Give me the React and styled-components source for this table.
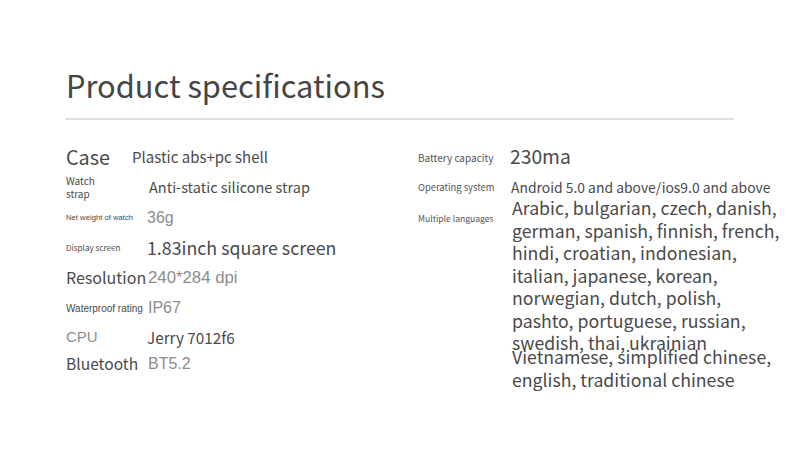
import styled, { createGlobalStyle } from 'styled-components';

const GlobalStyle = createGlobalStyle`
  html, body {
    margin: 0;
    padding: 0;
    background: #ffffff;
  }
  body {
    font-family: "Noto Sans CJK SC", "Noto Sans", sans-serif;
    color: #4a4a4a;
  }
`;

const leftSpecs = [
  { label: 'Case', labelSize: 19.8, value: 'Plastic abs+pc shell', valueSize: 15, gap: 66, h: 30 },
  { label: 'Watch\nstrap', labelSize: 10, value: 'Anti-static silicone strap', valueSize: 14.5, gap: 83, h: 30 },
  { label: 'Net weight of watch', labelSize: 7.7, value: '36g', valueSize: 16, gap: 81, h: 32, light: true, plainLabel: true },
  { label: 'Display screen', labelSize: 8.1, value: '1.83inch square screen', valueSize: 17.8, gap: 81, h: 28 },
  { label: 'Resolution', labelSize: 16, value: '240*284 dpi', valueSize: 16.8, gap: 82, h: 32, light: true },
  { label: 'Waterproof rating', labelSize: 10, value: 'IP67', valueSize: 16, gap: 82, h: 28, light: true, plainLabel: true },
  { label: 'CPU', labelSize: 15, value: 'Jerry 7012f6', valueSize: 15.3, gap: 81, h: 30, lightLabel: true },
  { label: 'Bluetooth', labelSize: 15.6, value: 'BT5.2', valueSize: 16, gap: 82, h: 24, light: true },
];

const languagesA = [
  'Arabic, bulgarian, czech, danish,',
  'german, spanish, finnish, french,',
  'hindi, croatian, indonesian,',
  'italian, japanese, korean,',
  'norwegian, dutch, polish,',
  'pashto, portuguese, russian,',
  'swedish, thai, ukrainian',
];
const languagesB = ['Vietnamese, simplified chinese,', 'english, traditional chinese'];

const App = () => {
  return (
    <Page>
      <GlobalStyle />
      <Title>Product specifications</Title>
      <Divider />
      <Columns>
        <LeftColumn>
          {leftSpecs.map((spec) => (
            <SpecRow key={spec.label} $gap={spec.gap} $h={spec.h}>
              <Label $size={spec.labelSize} $light={spec.lightLabel} $plain={spec.plainLabel}>
                {spec.label}
              </Label>
              <Value $size={spec.valueSize} $light={spec.light}>
                {spec.value}
              </Value>
            </SpecRow>
          ))}
        </LeftColumn>

        <RightColumn>
          <SpecRow $gap={92} $h={30}>
            <SmallLabel $size={10}>Battery capacity</SmallLabel>
            <Value $size={19.3}>230ma</Value>
          </SpecRow>
          <SpecRow $gap={93} $h={30}>
            <SmallLabel $size={9.4}>Operating system</SmallLabel>
            <Value $size={13.9}>Android 5.0 and above/ios9.0 and above</Value>
          </SpecRow>
          <LanguageRow>
            <SmallLabel $size={8.6} $offset={16}>
              Multiple languages
            </SmallLabel>
            <LanguageStack>
              <LanguageBlock>
                {languagesA.map((line) => (
                  <LanguageLine key={line}>{line}</LanguageLine>
                ))}
              </LanguageBlock>
              <LanguageBlock $overlap>
                {languagesB.map((line) => (
                  <LanguageLine key={line}>{line}</LanguageLine>
                ))}
              </LanguageBlock>
            </LanguageStack>
          </LanguageRow>
        </RightColumn>
      </Columns>
    </Page>
  );
};

export default App;

const Page = styled.div`
  width: 800px;
  height: 476px;
  padding: 62px 66px 0 66px;
  box-sizing: border-box;
  overflow: hidden;
`;

const Title = styled.h1`
  margin: 0;
  font-size: 30.8px;
  font-weight: 400;
  line-height: 46px;
  color: #454545;
`;

const Divider = styled.div`
  height: 2px;
  background: #e0e0e0;
  margin: 10px 0 0 -1px;
  width: 669px;
`;

const Columns = styled.div`
  display: grid;
  grid-template-columns: 352px 1fr;
  margin-top: 22px;
`;

const LeftColumn = styled.div`
  display: flex;
  flex-direction: column;
`;

const RightColumn = styled.div`
  display: flex;
  flex-direction: column;
`;

const SpecRow = styled.div`
  display: grid;
  grid-template-columns: ${(p) => p.$gap}px 1fr;
  align-items: center;
  height: ${(p) => p.$h}px;
`;

const Label = styled.div`
  font-size: ${(p) => p.$size}px;
  line-height: ${(p) => (p.$size < 12 ? 1.3 : 1.1)};
  white-space: pre-line;
  color: ${(p) => (p.$light ? '#8c8c8c' : '#4a4a4a')};
  font-family: ${(p) =>
    p.$light || p.$plain
      ? '"Liberation Sans", Arial, sans-serif'
      : '"Noto Sans CJK SC", "Noto Sans", sans-serif'};
`;

const Value = styled.div`
  font-size: ${(p) => p.$size}px;
  line-height: 1.2;
  white-space: nowrap;
  color: ${(p) => (p.$light ? '#8c8c8c' : '#4a4a4a')};
  font-family: ${(p) =>
    p.$light
      ? '"Liberation Sans", Arial, sans-serif'
      : '"Noto Sans CJK SC", "Noto Sans", sans-serif'};
`;

const SmallLabel = styled.div`
  font-size: ${(p) => p.$size}px;
  color: #555555;
  margin-top: ${(p) => p.$offset || 0}px;
`;

const LanguageRow = styled.div`
  display: grid;
  grid-template-columns: 94px 1fr;
  align-items: start;
  margin-top: -6px;
`;

const LanguageStack = styled.div`
  display: flex;
  flex-direction: column;
`;

const LanguageBlock = styled.div`
  display: flex;
  flex-direction: column;
  margin-top: ${(p) => (p.$overlap ? '-8.5px' : '0')};
`;

const LanguageLine = styled.div`
  font-size: 17.7px;
  line-height: 22.5px;
  white-space: nowrap;
  color: #4a4a4a;
`;
